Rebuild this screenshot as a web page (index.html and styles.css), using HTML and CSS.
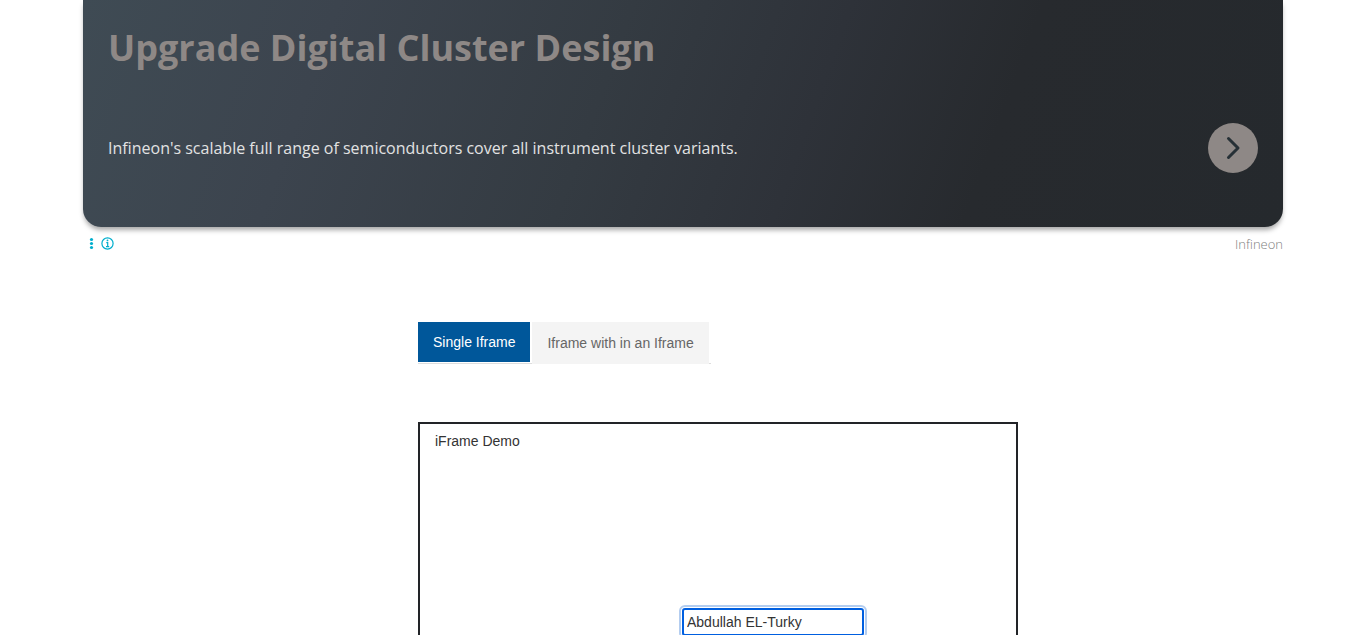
FILE: index.html
```html
<!DOCTYPE html>
<html lang="en">
<head>
<meta charset="utf-8">
<title>Frames</title>
<link rel="stylesheet" href="styles.css">
</head>
<body>
<aside class="ad">
  <div class="ad-card">
    <h2 class="ad-title">Upgrade Digital Cluster Design</h2>
    <div class="ad-row">
      <p class="ad-text">Infineon's scalable full range of semiconductors cover all instrument cluster variants.</p>
      <button class="ad-go" type="button" aria-label="Open">
        <svg width="50" height="50" viewBox="0 0 50 50" fill="none" stroke="#263036" stroke-width="3" stroke-linecap="round" stroke-linejoin="round"><path d="M20.5 15.5 30 25 20.5 34.5"/></svg>
      </button>
    </div>
  </div>
  <div class="ad-foot">
    <div class="ad-icons">
      <svg width="5" height="13" viewBox="0 0 5 13" fill="#00aecd"><circle cx="2.5" cy="2.5" r="1.6"/><circle cx="2.5" cy="6.5" r="1.6"/><circle cx="2.5" cy="10.5" r="1.6"/></svg>
      <svg width="13" height="13" viewBox="0 0 13 13" fill="none" stroke="#00aecd"><circle cx="6.5" cy="6.5" r="5.6" stroke-width="1.2"/><path d="M5.3 5.6h1.4v4M5 9.6h3.2" stroke-width="1.2"/><circle cx="6.5" cy="3.4" r=".9" fill="#00aecd" stroke="none"/></svg>
    </div>
    <span class="ad-brand">Infineon</span>
  </div>
</aside>
<main class="content">
  <nav class="tabs">
    <a class="tab tab-active" href="#single">Single Iframe</a>
    <a class="tab" href="#multiple">Iframe with in an Iframe</a>
  </nav>
  <section class="frame" id="single">
    <label class="frame-title" for="name">iFrame Demo</label>
    <input class="field" id="name" type="text" value="Abdullah EL-Turky">
  </section>
</main>
</body>
</html>
```

FILE: styles.css
```css
* { box-sizing: border-box; }
body {
  margin: 0;
  height: 100vh;
  overflow: hidden;
  background: #fff;
  color: #333;
  font: 14px/20px "Liberation Sans", Arial, sans-serif;
}
.ad {
  max-width: 1200px;
  margin: 0 auto;
  font-family: "Open Sans", sans-serif;
}
.ad-card {
  padding: 20px 25px 54px;
  border-radius: 0 0 18px 18px;
  background: linear-gradient(110deg, #3f4b54 0%, #3c444e 20%, #343b42 43%, #2e3239 60%, #272a2e 75%, #25292d 100%);
  box-shadow: 0 4px 5px -1px rgba(0, 0, 0, 0.35);
}
.ad-title {
  margin: 0 0 47px;
  color: #8e8886;
  font-size: 36px;
  line-height: 56px;
  font-weight: 700;
}
.ad-row {
  display: flex;
  align-items: center;
  justify-content: space-between;
}
.ad-text {
  margin: 0;
  color: #e2e2e2;
  font-size: 16px;
  line-height: 24px;
}
.ad-go {
  width: 50px;
  height: 50px;
  padding: 0;
  border: 0;
  border-radius: 50%;
  background: #8e8886;
}
.ad-go svg { display: block; }
.ad-foot {
  display: flex;
  align-items: flex-start;
  justify-content: space-between;
  padding: 7px 0 0 6px;
}
.ad-icons {
  display: flex;
  gap: 7px;
  padding-top: 3px;
}
.ad-brand {
  color: #808080;
  font-size: 13px;
  line-height: 20px;
  font-weight: 300;
}
.content {
  max-width: 670px;
  margin: 68px auto 0;
  padding-left: 70px;
}
.tabs {
  display: flex;
  align-items: flex-start;
  gap: 2px;
  width: fit-content;
  height: 42px;
  padding-right: 2px;
  border-bottom: 1px solid #ddd;
}
.tab {
  padding: 11px 15px;
  background: #f4f4f4;
  color: #666;
  text-decoration: none;
}
.tab-active {
  padding: 10px 15px;
  background: #00579a;
  color: #fff;
}
.frame {
  display: flex;
  flex-direction: column;
  height: 400px;
  margin-top: 58px;
  padding: 7px 15px;
  border: 2px solid #222428;
}
.frame-title { margin-bottom: 157px; }
.field {
  width: 182px;
  height: 28px;
  margin-left: 247px;
  padding: 2px 3px;
  border: 2px solid #005fe0;
  border-radius: 3px;
  outline: 2px solid #b3cdf0;
  outline-offset: 1px;
  color: #333;
  font: inherit;
}
```
